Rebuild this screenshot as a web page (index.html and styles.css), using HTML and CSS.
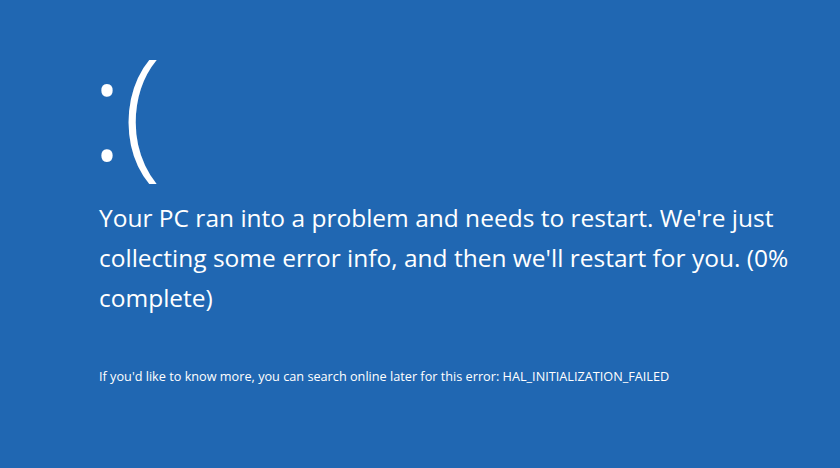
FILE: index.html
```html
<!DOCTYPE html>
<html>
<head>
<meta charset="utf-8">
<link rel="stylesheet" href="styles.css">
</head>
<body>
<main class="screen">
  <div class="face">:(</div>
  <p class="message">Your PC ran into a problem and needs to restart. We're just collecting some error info, and then we'll restart for you. (0% complete)</p>
  <p class="detail">If you'd like to know more, you can search online later for this error: HAL_INITIALIZATION_FAILED</p>
</main>
</body>
</html>
```

FILE: styles.css
```css
html, body {
  margin: 0;
  padding: 0;
  background: #2067b2;
}
.screen {
  width: 840px;
  height: 468px;
  box-sizing: border-box;
  padding: 26px 0 0 99px;
  color: #ffffff;
  font-family: "Open Sans", "Noto Sans", sans-serif;
  overflow: hidden;
}
.face {
  margin-left: -9px;
  font-size: 142px;
  font-weight: 300;
  line-height: 160px;
  height: 172px;
  letter-spacing: -1px;
}
.message {
  margin: 0;
  width: 720px;
  font-size: 24.5px;
  line-height: 40px;
}
.detail {
  margin: 50px 0 0;
  font-size: 12.7px;
  line-height: 16px;
}
```
